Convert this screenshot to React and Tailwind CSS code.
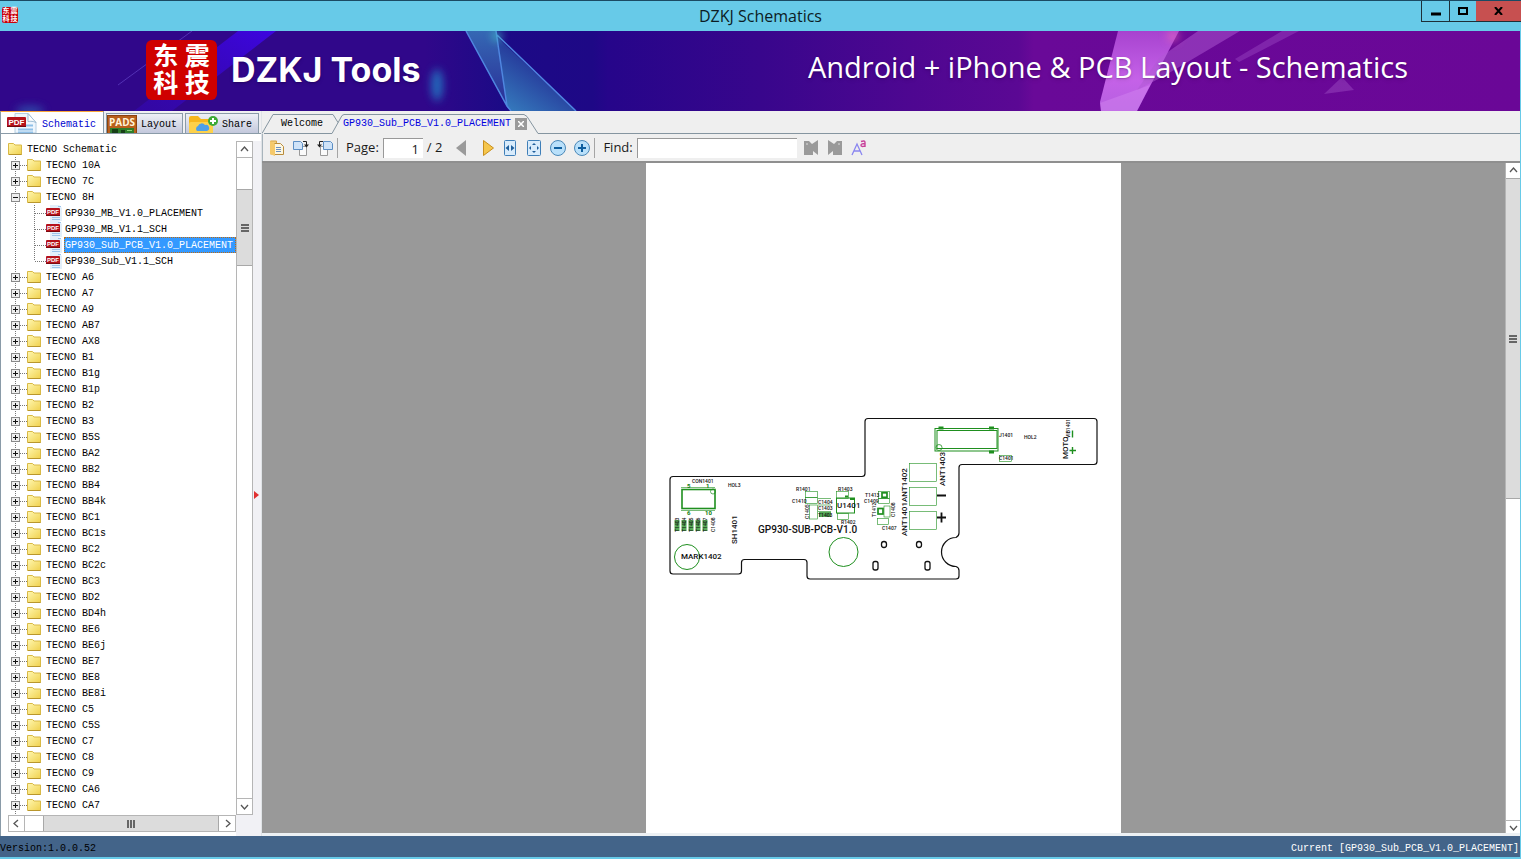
import React, { useState } from "react";

const FOLDERS_BEFORE = ["TECNO 10A", "TECNO 7C"];

const OPEN_FOLDER = {
  name: "TECNO 8H",
  files: [
    "GP930_MB_V1.0_PLACEMENT",
    "GP930_MB_V1.1_SCH",
    "GP930_Sub_PCB_V1.0_PLACEMENT",
    "GP930_Sub_V1.1_SCH",
  ],
};

const FOLDERS_AFTER = [
  "A6", "A7", "A9", "AB7", "AX8", "B1", "B1g", "B1p", "B2", "B3", "B5S",
  "BA2", "BB2", "BB4", "BB4k", "BC1", "BC1s", "BC2", "BC2c", "BC3", "BD2",
  "BD4h", "BE6", "BE6j", "BE7", "BE8", "BE8i", "C5", "C5S", "C7", "C8", "C9",
  "CA6", "CA7",
];

const MONO = "font-['Liberation_Mono','Noto_Sans_CJK_SC',monospace] text-[10px] leading-4";

/* ---------- icons ---------- */

function FolderIcon() {
  return (
    <svg width="15" height="14" viewBox="0 0 15 14" className="shrink-0">
      <defs>
        <linearGradient id="folder" x1="0" y1="0" x2="1" y2="1">
          <stop offset="0" stopColor="#fff7b0" />
          <stop offset="1" stopColor="#f0d14e" />
        </linearGradient>
      </defs>
      <path d="M.5 12.500v-11h5l1.500 1.500h6.500v9.500z" fill="url(#folder)" stroke="#d9b945" />
      <path d="M1 12.500h12.500" stroke="#b9962c" />
    </svg>
  );
}

function PdfSmallIcon() {
  return (
    <svg width="16" height="16" viewBox="0 0 16 16" className="shrink-0">
      <path d="M4 0h9l3 3v13H4z" fill="#e3effa" />
      <path d="M6 12.500h8M6 14.500h8M12 1.500h3" stroke="#9cc4ea" />
      <rect x="0" y="3" width="14" height="8" rx="1" fill="#b5121b" />
      <path d="M0 10.500h14" stroke="#7b0a10" />
      <text x="7" y="9" textAnchor="middle" fontSize="6" fontWeight="700" fill="#fff" fontFamily="Liberation Sans, sans-serif">PDF</text>
    </svg>
  );
}

function PdfTabIcon() {
  return (
    <svg width="31" height="20" viewBox="0 0 31 20" className="shrink-0">
      <path d="M8 .5h13l8 9V20H8z" fill="#eef6fd" stroke="#b6cfe2" />
      <path d="M21 .5l8 9c-4-2-7-1-8-1z" fill="#fff" stroke="#9fbdd3" />
      <path d="M11 16.500h15M18 12.500h8M11 19.500h15" stroke="#8fc0e8" strokeWidth="2" />
      <rect x="0" y="4" width="19" height="10" rx="1" fill="#b5121b" />
      <path d="M0 13.500h19" stroke="#6f0a10" />
      <text x="9.500" y="12" textAnchor="middle" fontSize="8" fontWeight="700" fill="#fff" fontFamily="Liberation Sans, sans-serif">PDF</text>
    </svg>
  );
}

function PadsIcon() {
  return (
    <svg width="30" height="18" viewBox="0 0 30 18" className="shrink-0">
      <rect x=".5" y=".5" width="29" height="18" fill="#b8601c" stroke="#8a4210" />
      <path d="M3 18v-5h24v5z" fill="#2f7d2a" />
      <path d="M5 14h6v4H5zM14 15h4v3h-4z" fill="#173f17" />
      <path d="M20 15.500h5" stroke="#8fd47a" />
      <text x="15" y="10.500" textAnchor="middle" fontSize="10" fontWeight="700" fill="#fff3d8" fontFamily="Open Sans, sans-serif">PADS</text>
    </svg>
  );
}

function ShareIcon() {
  return (
    <svg width="32" height="18" viewBox="0 0 32 18" className="shrink-0">
      <path d="M1 18V3q0-2 2-2h7l3 3h10q2 0 2 2v12z" fill="#f7b71d" />
      <path d="M1 18V9q0-2 2-2h20q2 0 2 2v9z" fill="#fdd14a" />
      <path d="M9 16a3 3 0 0 1 1-5 4 4 0 0 1 7-1 3 3 0 0 1 2 6z" fill="#4d9fe8" />
      <circle cx="25" cy="6" r="5" fill="#3da935" />
      <path d="M25 3v6M22 6h6" stroke="#fff" strokeWidth="2" />
    </svg>
  );
}

/* dotted connector lines of the tree */
function Guide({ type }) {
  return (
    <svg width="19" height="16" viewBox="0 0 19 16" className="shrink-0" stroke="#777" strokeDasharray="1 1" fill="none">
      <path d={type === "last" ? "M7.500 0v8" : "M7.500 0v16"} />
      {type !== "line" && <path d="M8 8.500h11" />}
      {(type === "plus" || type === "minus") && (
        <g strokeDasharray="none">
          <rect x="3.500" y="4.500" width="8" height="8" fill="#eee" stroke="#8a8a8a" />
          <path d="M5 8.500h5" stroke="#111" />
          {type === "plus" && <path d="M7.500 6v5" stroke="#111" />}
        </g>
      )}
    </svg>
  );
}

function Chevron({ dir }) {
  const paths = {
    up: "M1 6l3.500-4L8 6",
    down: "M1 3l3.500 4L8 3",
    left: "M6 1L2 4.500 6 8",
    right: "M3 1l4 3.500L3 8",
  };
  return (
    <svg width="9" height="9" viewBox="0 0 9 9" fill="none" stroke="#555" strokeWidth="1.300">
      <path d={paths[dir]} />
    </svg>
  );
}

function Logo({ small }) {
  if (small) {
    return (
      <div className="grid h-4 w-4 shrink-0 grid-cols-2 place-items-center rounded-xs bg-[#c8000a] font-['Liberation_Sans','Noto_Sans_CJK_SC',sans-serif] text-[7px] leading-[8px] font-bold text-white">
        <span>东</span><span>震</span><span>科</span><span>技</span>
      </div>
    );
  }
  return (
    <div className="grid h-[60px] w-[71px] shrink-0 grid-cols-2 content-center justify-items-center rounded-md bg-[#cf0000] px-1 font-['Liberation_Sans','Noto_Sans_CJK_SC',sans-serif] text-[25px] leading-[27px] font-bold text-white">
      <span>东</span><span>震</span><span>科</span><span>技</span>
    </div>
  );
}

/* ---------- window frame ---------- */

function TitleBar() {
  return (
    <header className="relative flex h-[31px] shrink-0 items-center justify-center border-t border-[#1b4a63] bg-[#67cae8]">
      <div className="absolute top-1.5 left-0.5">
        <Logo small />
      </div>
      <h1 className="font-['Open_Sans',sans-serif] text-base leading-5 text-[#0c1c24]">DZKJ Schematics</h1>
      <div className="absolute top-0 right-0 flex h-[21px] border-b border-l border-[#1d2f38]">
        <button aria-label="Minimize" className="flex w-7 items-center justify-center border-r border-[#1d2f38]">
          <svg width="10" height="10"><path d="M0 8h10" stroke="#000" strokeWidth="3" /></svg>
        </button>
        <button aria-label="Maximize" className="flex w-[26px] items-center justify-center">
          <svg width="10" height="8"><path d="M1 1h8v6H1z" fill="none" stroke="#000" strokeWidth="2" /></svg>
        </button>
        <button aria-label="Close" className="flex w-[45px] items-center justify-center bg-[#c75050]">
          <svg width="9" height="8"><path d="M1 0l7 8M8 0L1 8" stroke="#000" strokeWidth="2" /></svg>
        </button>
      </div>
    </header>
  );
}

function Banner() {
  return (
    <div className="relative flex h-20 shrink-0 items-center overflow-hidden border-r border-[#67cae8] bg-[#30078a]">
      <svg className="absolute inset-0 h-full w-full" viewBox="0 0 1520 80" preserveAspectRatio="none">
        <defs>
          <linearGradient id="banner">
            <stop offset="0" stopColor="#30078a" />
            <stop offset=".28" stopColor="#30078a" />
            <stop offset=".33" stopColor="#1c0a86" />
            <stop offset=".39" stopColor="#1e0886" />
            <stop offset=".4" stopColor="#26058a" />
            <stop offset=".5" stopColor="#38068c" />
            <stop offset=".6" stopColor="#4e0791" />
            <stop offset=".67" stopColor="#5b0894" />
            <stop offset=".68" stopColor="#690998" />
            <stop offset="1" stopColor="#6a0797" />
          </linearGradient>
          <linearGradient id="streak" x1="1" y1="0" x2="0" y2="1">
            <stop offset="0" stopColor="#3d05e0" />
            <stop offset="1" stopColor="#3508b8" stopOpacity=".5" />
          </linearGradient>
          <linearGradient id="pink" x1="0" y1="0" x2="0" y2="1">
            <stop offset="0" stopColor="#a743cf" />
            <stop offset=".6" stopColor="#c562e8" />
            <stop offset="1" stopColor="#b65fe0" />
          </linearGradient>
          <linearGradient id="prism" x1="0" y1="1" x2=".6" y2=".2">
            <stop offset="0" stopColor="#3a90c8" />
            <stop offset="1" stopColor="#222a92" />
          </linearGradient>
          <linearGradient id="prismEdge" x1="0" y1="0" x2="0" y2="1">
            <stop offset="0" stopColor="#3568b4" />
            <stop offset="1" stopColor="#2a2c96" />
          </linearGradient>
          <filter id="soft" x="-1" y="-1" width="3" height="3">
            <feGaussianBlur stdDeviation="4" />
          </filter>
        </defs>
        <rect width="1520" height="80" fill="url(#banner)" />
        <path d="M238 0h38L172 80h-38z" fill="url(#streak)" />
        <path d="M192 0l-74 54" stroke="#6b4fd0" strokeOpacity=".6" />
        <ellipse cx="30" cy="80" rx="14" ry="5" fill="#2f63b5" opacity=".7" filter="url(#soft)" />
        <ellipse cx="437" cy="54" rx="6" ry="16" fill="#2382c8" opacity=".8" filter="url(#soft)" />
        <path d="M466 0h30l11 76z" fill="url(#prismEdge)" />
        <path d="M497 6l79 74H511l-4-4z" fill="url(#prism)" opacity=".9" />
        <path d="M466 0l41 75 4 5M496 0l11 75M497 4l79 76" stroke="#4f86e0" strokeWidth="1.500" fill="none" />
        <circle cx="497" cy="5" r="5" fill="#43c0c8" opacity=".8" filter="url(#soft)" />
        <path d="M1118 0h61l-42 80h-36l-1-9z" fill="url(#pink)" />
        <path d="M1100 72l50-18-13 26h-36z" fill="#d68cf2" opacity=".4" />
        <path d="M1198 0h42l-76 45-27 14 22-32z" fill="#b05ad4" opacity=".5" />
        <path d="M1282 0h17l-60 31-4-3z" fill="#a04fc8" opacity=".4" />
        <path d="M1324 63l18-17 12 13z" fill="#9a48c0" opacity=".5" />
        <circle cx="1173" cy="5" r="6" fill="#f06ab8" opacity=".6" filter="url(#soft)" />
      </svg>
      <div className="relative flex w-full items-center justify-between pr-[112px] pb-0.5 pl-[146px] text-white">
        <div className="flex items-center gap-3.5">
          <Logo />
          <p className="font-['Inter','Open_Sans',sans-serif] text-[34px] leading-none font-bold text-shadow-md">DZKJ Tools</p>
        </div>
        <p className="pb-2 font-['Open_Sans',sans-serif] text-[29px] leading-none text-shadow-md">
          Android + iPhone &amp; PCB Layout - Schematics
        </p>
      </div>
    </div>
  );
}

/* ---------- left side ---------- */

function SideTabs() {
  return (
    <nav className={`flex h-[23px] shrink-0 items-end gap-0.5 border-b border-[#8a9ba8] bg-[#f0f0f2] ${MONO}`}>
      <button className="flex h-[23px] w-[104px] items-end gap-1 border-t-2 border-r border-l border-t-[#f9a63a] border-r-[#8a9ba8] border-l-[#8a9ba8] bg-white pl-1.5 text-[#0000d0]">
        <PdfTabIcon />
        <span>Schematic</span>
      </button>
      <button className="flex h-5 w-[77px] items-end gap-1 border border-b-0 border-[#8a9ba8] bg-linear-to-b from-[#eef0f6] to-[#c3c8dc] text-black">
        <PadsIcon />
        <span>Layout</span>
      </button>
      <button className="flex h-5 w-[74px] items-end gap-0.5 border border-b-0 border-[#8a9ba8] bg-linear-to-b from-[#eef0f6] to-[#c3c8dc] pl-0.5 text-black">
        <ShareIcon />
        <span>Share</span>
      </button>
    </nav>
  );
}

function FolderRow({ name, open }) {
  return (
    <li className="flex h-4 items-center">
      <Guide type={open ? "minus" : "plus"} />
      <FolderIcon />
      <span className="pt-0.5 pl-1">{name}</span>
    </li>
  );
}

function Tree() {
  const [selected, setSelected] = useState("GP930_Sub_PCB_V1.0_PLACEMENT");

  return (
    <ul className={`min-h-0 flex-1 overflow-hidden whitespace-nowrap text-black ${MONO}`}>
      <li className="flex h-4 items-center">
        <FolderIcon />
        <span className="pt-0.5 pl-1">TECNO Schematic</span>
      </li>
      {FOLDERS_BEFORE.map((name) => (
        <FolderRow key={name} name={name} />
      ))}
      <FolderRow name={OPEN_FOLDER.name} open />
      {OPEN_FOLDER.files.map((file, i) => (
        <li key={file} className="flex h-4 items-center">
          <Guide type="line" />
          <Guide type={i === OPEN_FOLDER.files.length - 1 ? "last" : "branch"} />
          <PdfSmallIcon />
          <button
            onClick={() => setSelected(file)}
            className={
              file === selected
                ? "ml-0.5 h-4 flex-1 border border-dotted border-[#c06a10] bg-[#3399ff] pt-px text-left leading-[14px] text-white"
                : "ml-0.5 h-4 flex-1 border border-transparent pt-px text-left leading-[14px]"
            }
          >
            {file}
          </button>
        </li>
      ))}
      {FOLDERS_AFTER.map((name) => (
        <FolderRow key={name} name={`TECNO ${name}`} />
      ))}
      <FolderRow />
    </ul>
  );
}

function Sidebar() {
  return (
    <aside className="flex w-[261px] shrink-0 flex-col">
      <SideTabs />
      <div className="flex min-h-0 flex-1 border-l border-[#8a9ba8] bg-white pt-[7px]">
        <div className="flex min-w-0 flex-1 flex-col pb-1 pl-[7px]">
          <Tree />
          <div className="flex h-[17px] shrink-0 border border-[#b5b5b5] bg-white">
            <button aria-label="Scroll left" className="flex w-4 items-center justify-center border-r border-[#b5b5b5]">
              <Chevron dir="left" />
            </button>
            <div className="ml-[18px] flex flex-1 items-center justify-center gap-px border-x border-[#a8a8a8] bg-[#dcdcdc]">
              <i className="h-2 w-0.5 bg-[#666]" />
              <i className="h-2 w-0.5 bg-[#666]" />
              <i className="h-2 w-0.5 bg-[#666]" />
            </div>
            <button aria-label="Scroll right" className="flex w-4 items-center justify-center">
              <Chevron dir="right" />
            </button>
          </div>
        </div>
        <div className="flex w-[25px] shrink-0 bg-[#f1f1f5]">
          <div className="mb-[21px] flex w-[17px] flex-col border border-[#b5b5b5] bg-white">
            <button aria-label="Scroll up" className="flex h-4 items-center justify-center border-b border-[#b5b5b5]">
              <Chevron dir="up" />
            </button>
            <div className="mt-[31px] flex h-[77px] flex-col items-center justify-center gap-px border-y border-[#a8a8a8] bg-[#dcdcdc]">
              <i className="h-0.5 w-2 bg-[#666]" />
              <i className="h-0.5 w-2 bg-[#666]" />
              <i className="h-0.5 w-2 bg-[#666]" />
            </div>
            <button aria-label="Scroll down" className="mt-auto flex h-4 items-center justify-center border-t border-[#b5b5b5]">
              <Chevron dir="down" />
            </button>
          </div>
          <div className="flex items-center pt-3 pl-px">
            <svg width="5" height="8">
              <path d="M0 0l5 4-5 4z" fill="#e03030" />
            </svg>
          </div>
        </div>
      </div>
    </aside>
  );
}

/* ---------- document ---------- */

function DocTabs() {
  return (
    <nav className={`relative flex h-[23px] shrink-0 items-end bg-[#efefef] ${MONO}`}>
      <svg className="absolute inset-0 h-full w-full" fill="none" stroke="#8595a0">
        <path d="M0 22.500L11 3.500h60l5 8M70 22.500L80 4.500l2-1h180l3 2 11 17h3000" />
        <path d="M2 22.500h68" />
      </svg>
      <button className="relative h-5 pr-5 pl-[19px] text-black">Welcome</button>
      <button className="relative h-5 text-[#0000e0]">GP930_Sub_PCB_V1.0_PLACEMENT</button>
      <button aria-label="Close tab" className="relative mb-1 ml-1 flex h-3 w-3 items-center justify-center bg-[#9a9a9a]">
        <svg width="6" height="6"><path d="M0 0l6 6M6 0L0 6" stroke="#fff" strokeWidth="1.500" /></svg>
      </button>
    </nav>
  );
}

function ToolButton({ label, children }) {
  return (
    <button aria-label={label} className="flex h-5 w-6 shrink-0 items-center justify-center">
      <svg width="18" height="18" viewBox="0 0 18 18" fill="none">
        {children}
      </svg>
    </button>
  );
}

function Toolbar() {
  return (
    <div className="flex h-[27px] shrink-0 items-center border-l border-[#a8b4bc] bg-[#efefef] pt-px pl-0.5 font-['Open_Sans',sans-serif] text-[13px] text-[#1a1a1a]">
      <ToolButton label="Open">
        <path d="M2.500 2h6v13h-6z" fill="#f2cf7e" stroke="#d8a343" />
        <path d="M6.500 4.500h6l3 3v8h-9z" fill="#fdf6df" stroke="#b98c3c" />
        <path d="M8 8.500h5M8 10.500h5M8 12.500h5" stroke="#6a8fc0" />
        <path d="M2 2l5 3v12l-5-2z" fill="#f5c96a" />
      </ToolButton>
      <ToolButton label="Rotate right">
        <path d="M7.500 7.500h7v9h-7z" fill="#fafafa" stroke="#9a9a9a" />
        <path d="M1.500 2.500h7l2 2v6h-9z" fill="#cfe3f8" stroke="#5d8fc4" />
        <path d="M11 2.500h3.500V6" stroke="#222" />
        <path d="M12 5.500h5l-2.500 3z" fill="#222" />
      </ToolButton>
      <ToolButton label="Rotate left">
        <path d="M4.500 7.500h7v9h-7z" fill="#fafafa" stroke="#9a9a9a" />
        <path d="M7.500 2.500h7l2 2v6h-9z" fill="#cfe3f8" stroke="#5d8fc4" />
        <path d="M7 2.500H3.500V6" stroke="#222" />
        <path d="M1 5.500h5l-2.500 3z" fill="#222" />
      </ToolButton>
      <i className="h-5 w-px bg-[#a5a5a5]" />
      <label htmlFor="page" className="pl-2">Page:</label>
      <input
        id="page"
        defaultValue="1"
        className="ml-1 h-5 w-10 border-t border-l border-[#999] bg-white pr-1 text-right outline-none"
      />
      <span className="pr-2 pl-1">/ 2</span>
      <ToolButton label="Previous page">
        <path d="M13 1v16L3 9z" fill="#9a9a9a" />
      </ToolButton>
      <ToolButton label="Next page">
        <path d="M6.500 1.500v15l10-7.500z" fill="#f5c64c" stroke="#c98f1d" />
      </ToolButton>
      <ToolButton label="Fit width">
        <rect x="3.500" y="1.500" width="11" height="15" rx="1" fill="#d8ebfb" stroke="#3f7fb8" />
        <path d="M8 6v6L4.500 9zM10 6v6l3.500-3z" fill="#1f5f9c" />
      </ToolButton>
      <ToolButton label="Fit page">
        <rect x="2.500" y="1.500" width="13" height="15" rx="1" fill="#d8ebfb" stroke="#3f7fb8" />
        <path d="M7 6l2-2 2 2zM7 12l2 2 2-2zM6 7L4 9l2 2zM12 7l2 2-2 2z" fill="#1f5f9c" />
      </ToolButton>
      <ToolButton label="Zoom out">
        <circle cx="9" cy="9" r="7.500" fill="#b9e0fa" stroke="#4a88b8" />
        <path d="M5 9h8" stroke="#0f5f9f" strokeWidth="2" />
      </ToolButton>
      <ToolButton label="Zoom in">
        <circle cx="9" cy="9" r="7.500" fill="#b9e0fa" stroke="#4a88b8" />
        <path d="M5 9h8M9 5v8" stroke="#0f5f9f" strokeWidth="2" />
      </ToolButton>
      <i className="h-5 w-px bg-[#a5a5a5]" />
      <label htmlFor="find" className="pl-2">Find:</label>
      <input
        id="find"
        className="mr-0.5 ml-1 h-5 w-40 border-t border-l border-[#999] bg-white px-1 outline-none"
      />
      <ToolButton label="Find previous">
        <path d="M2 2h5l3 3 6-4v15l-5-4v4H2z" fill="#9a9a9a" />
        <path d="M4 5h2" stroke="#ddd" />
      </ToolButton>
      <ToolButton label="Find next">
        <path d="M16 2h-5L8 5 2 1v15l5-4v4h9z" fill="#9a9a9a" />
        <path d="M12 5h2" stroke="#ddd" />
      </ToolButton>
      <ToolButton label="Match case">
        <path d="M2 16l5-11 5 11M4 12h6" stroke="#8a86f0" strokeWidth="1.300" />
        <path d="M11 2.500q4-1.500 4 1V8M15 4.500q-4 0-4 1.800 0 2 4 .5" stroke="#c8419a" strokeWidth="1.400" />
      </ToolButton>
    </div>
  );
}

/* [text, x, y, size] */
const LABELS = [
  ["CON1401", 692, 483, 5],
  ["HOL3", 728, 487, 5],
  ["R1401", 796, 491, 5],
  ["C1410", 792, 503, 5],
  ["C1404", 818, 504, 5],
  ["C1403", 818, 510, 5],
  ["T1403", 818, 517, 5],
  ["R1403", 838, 491, 5],
  ["R1402", 841, 524, 5],
  ["T1413", 865, 497, 5],
  ["C1409", 864, 503, 5],
  ["C1407", 882, 530, 5],
  ["J1401", 999, 437, 5],
  ["HOL2", 1024, 439, 5],
  ["C1401", 999, 460, 5],
  ["U1401", 837, 508, 8],
  ["MARK1402", 681, 559, 8],
  ["GP930-SUB-PCB-V1.0", 758, 533, 10],
];

/* labels that read bottom to top */
const SIDE_LABELS = [
  ["SH1401", 737, 544, 8],
  ["ANT1403", 945, 486, 8],
  ["ANT1401ANT1402", 907, 536, 8],
  ["MOTO", 1068, 459, 8],
  ["VIB1401", 1070, 438, 5],
  ["T1403", 679, 532, 5],
  ["T1404", 686, 532, 5],
  ["T1405", 693, 532, 5],
  ["T1406", 700, 532, 5],
  ["T1407", 707, 532, 5],
  ["C1408", 715, 532, 5],
  ["C1405", 809, 519, 5],
  ["T1412", 876, 517, 5],
  ["C1408", 895, 517, 5],
];

function BoardDrawing() {
  return (
    <svg className="h-full w-full" viewBox="646 163 475 670" fill="none" fontFamily="Roboto, sans-serif">
      <path
        d="M673 476.500H862q3 0 3-3V421.500q0-3 3-3H1094q3 0 3 3V461.500q0 3-3 3H962q-3 0-3 3V533q0 3-3 4.500a14.500 14.500 0 0 0 0 29q3 1 3 4V576q0 3-3 3H810q-3 0-3-3V562.500q0-3-3-3H744.500q-3 0-3 3V571q0 3-3 3H673q-3 0-3-3V479.500q0-3 3-3z"
        stroke="#111"
        strokeWidth="1.200"
      />
      <g stroke="#111" strokeWidth="1.300">
        <rect x="881.500" y="541.500" width="5" height="6" rx="2.500" />
        <rect x="916.500" y="541.500" width="5" height="6" rx="2.500" />
        <rect x="873" y="561.500" width="5" height="8.500" rx="2" />
        <rect x="925" y="561.500" width="5" height="8.500" rx="2" />
        <path d="M937 495.500h9M937 517.500h9M941.500 512.500v10" strokeWidth="1.800" />
      </g>
      <g stroke="#1f8f1f">
        <circle cx="687" cy="557" r="12.500" />
        <circle cx="843.500" cy="552" r="14.500" />
        <rect x="682" y="489.500" width="33" height="19" strokeWidth="1.600" />
        <path d="M681 487.500h34M681 510.500h34" strokeWidth=".6" />
        <circle cx="713" cy="491.500" r="2.500" strokeWidth=".7" />
        <rect x="935" y="428.500" width="63" height="22.500" />
        <rect x="937" y="430.500" width="60" height="18" />
        <circle cx="939" cy="447.500" r="3" strokeWidth=".8" />
        <path d="M938.500 428h5M989 428h5M989 452h5" strokeWidth="3" />
        <path d="M1072.500 430.500v7M1069.500 450.500h6.500M1072.500 447v7" strokeWidth="1.400" />
        <g strokeWidth=".6">
          <rect x="909.500" y="463.500" width="27" height="18" />
          <rect x="909.500" y="487.500" width="27" height="18" />
          <rect x="909.500" y="511.500" width="27" height="18" />
          <rect x="805.500" y="491.500" width="12" height="6" />
          <rect x="805.500" y="497.500" width="12" height="6" />
          <rect x="809.500" y="505" width="8" height="14" />
          <rect x="836.500" y="491.500" width="12" height="7" />
          <rect x="837.500" y="513.500" width="11" height="6" />
          <rect x="878.500" y="498.500" width="11" height="5" />
          <rect x="884" y="506" width="6" height="11" />
          <rect x="877.500" y="518.500" width="11" height="6" />
          <rect x="999.500" y="455.500" width="12" height="6" />
          <rect x="878.500" y="491.500" width="11" height="7" />
          <path d="M818 498.500h13M818 505h13M818 511.500h13" />
        </g>
        <rect x="836.500" y="498" width="18" height="15" />
        <path d="M845 496.500h3M850 499h5" strokeWidth="2" />
        <rect x="882" y="492.800" width="5" height="4.500" strokeWidth="1.700" />
        <rect x="878" y="508.500" width="5" height="5.500" strokeWidth="1.700" />
      </g>
      <g fill="#1f8f1f" opacity=".75">
        <rect x="674.500" y="520" width="5" height="11" />
        <rect x="681.500" y="520" width="5" height="11" />
        <rect x="688.500" y="520" width="5" height="11" />
        <rect x="695.500" y="520" width="5" height="11" />
        <rect x="702.500" y="520" width="5" height="11" />
        <rect x="819" y="512" width="12" height="5" />
      </g>
      <g fill="#0d7a0d" fontSize="6" fontWeight="700">
        <text x="687" y="488">5</text>
        <text x="706" y="488">1</text>
        <text x="687" y="515">6</text>
        <text x="705" y="515">10</text>
      </g>
      <g fill="#111" fontWeight="500">
        {LABELS.map(([text, x, y, size]) => (
          <text key={text + x} x={x} y={y} fontSize={size}>{text}</text>
        ))}
        {SIDE_LABELS.map(([text, x, y, size]) => (
          <text key={text + x} fontSize={size} transform={`translate(${x} ${y}) rotate(-90)`}>{text}</text>
        ))}
      </g>
    </svg>
  );
}

function DocumentView() {
  return (
    <main className="flex min-h-0 flex-1 border-t-2 border-[#8f8f8f] bg-[#999999]">
      <div className="flex min-w-0 flex-1 justify-center">
        <div className="h-full w-[475px] bg-white">
          <BoardDrawing />
        </div>
      </div>
      <div className="flex w-[15px] shrink-0 flex-col border-l border-[#b5b5b5] bg-white">
        <button aria-label="Scroll page up" className="flex h-4 items-center justify-center border-b border-[#a8a8a8]">
          <Chevron dir="up" />
        </button>
        <div className="flex h-80 flex-col items-center justify-center gap-px border-b border-[#a8a8a8] bg-[#dcdcdc]">
          <i className="h-0.5 w-2 bg-[#666]" />
          <i className="h-0.5 w-2 bg-[#666]" />
          <i className="h-0.5 w-2 bg-[#666]" />
        </div>
        <button aria-label="Scroll page down" className="mt-auto flex h-[13px] items-center justify-center border-t border-[#b5b5b5]">
          <Chevron dir="down" />
        </button>
      </div>
    </main>
  );
}

export default function App() {
  return (
    <div className="flex h-screen flex-col overflow-hidden bg-[#67cae8]">
      <TitleBar />
      <Banner />
      <div className="mr-px flex min-h-0 flex-1 gap-px bg-[#dfe3e6]">
        <Sidebar />
        <section className="flex min-w-0 flex-1 flex-col border-b-[3px] border-[#edf1f4]">
          <DocTabs />
          <Toolbar />
          <DocumentView />
        </section>
      </div>
      <footer className={`mr-px mb-0.5 flex h-[21px] shrink-0 items-end justify-between bg-[#436489] ${MONO}`}>
        <span className="text-black">Version:1.0.0.52</span>
        <span className="pr-px text-white">Current [GP930_Sub_PCB_V1.0_PLACEMENT]</span>
      </footer>
    </div>
  );
}
